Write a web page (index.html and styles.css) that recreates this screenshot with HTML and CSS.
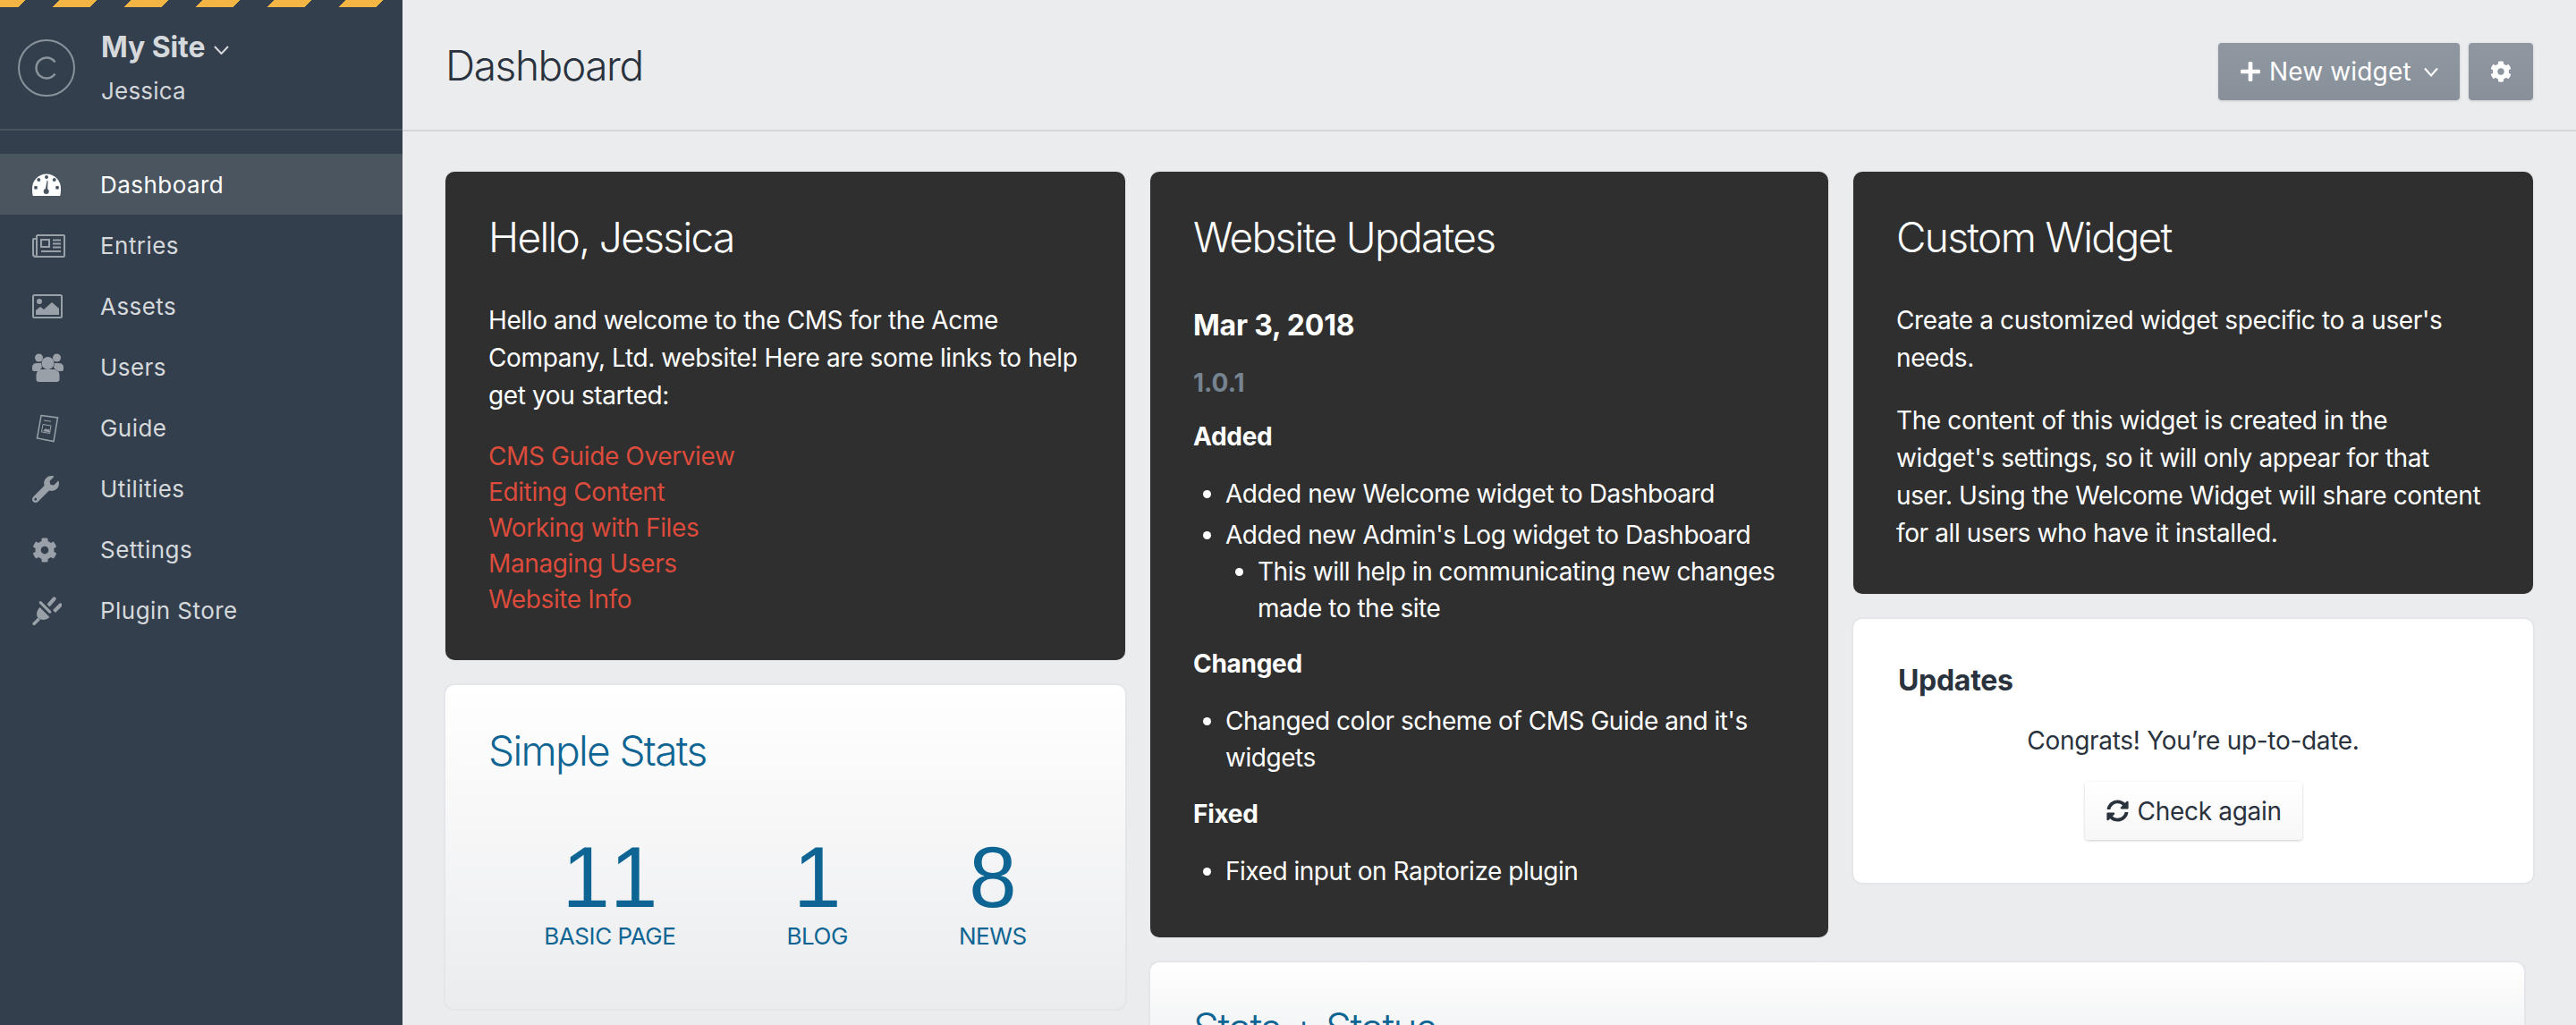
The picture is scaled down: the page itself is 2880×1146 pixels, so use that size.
FILE: index.html
```html
<!DOCTYPE html>
<html lang="en">
<head>
<meta charset="utf-8">
<title>Dashboard</title>
<link rel="stylesheet" href="styles.css">
</head>
<body>
<svg class="defs" width="0" height="0">
  <symbol id="cog" viewBox="0 0 512 512"><path d="M487.4 315.7l-42.6-24.6c4.3-23.2 4.3-47 0-70.2l42.6-24.6c4.9-2.8 7.1-8.6 5.5-14-11.1-35.6-30-67.8-54.7-94.6-3.8-4.1-10-5.1-14.8-2.3L380.8 110c-17.9-15.4-38.5-27.3-60.8-35.1V25.8c0-5.6-3.9-10.5-9.4-11.7-36.7-8.2-74.3-7.8-109.2 0-5.5 1.2-9.4 6.1-9.4 11.7V75c-22.2 7.9-42.8 19.8-60.8 35.1L88.7 85.5c-4.9-2.8-11-1.9-14.8 2.3-24.7 26.7-43.6 58.9-54.7 94.6-1.7 5.4.6 11.2 5.5 14L67.3 221c-4.3 23.2-4.3 47 0 70.2l-42.6 24.6c-4.9 2.8-7.1 8.6-5.5 14 11.1 35.6 30 67.8 54.7 94.6 3.8 4.1 10 5.1 14.8 2.3l42.6-24.6c17.9 15.4 38.5 27.3 60.8 35.1v49.2c0 5.6 3.9 10.5 9.4 11.7 36.7 8.2 74.3 7.8 109.2 0 5.5-1.2 9.4-6.1 9.4-11.7v-49.2c22.2-7.9 42.8-19.8 60.8-35.1l42.6 24.6c4.9 2.8 11 1.9 14.8-2.3 24.7-26.7 43.6-58.9 54.7-94.6 1.5-5.5-.7-11.3-5.6-14.1zM256 336c-44.1 0-80-35.9-80-80s35.9-80 80-80 80 35.9 80 80-35.9 80-80 80z"/></symbol>
</svg>
<div class="app">
  <aside class="sidebar">
    <div class="stripes"></div>
    <div class="site">
      <div class="logo">
        <svg width="28" height="28" viewBox="0 0 28 28"><path class="logo-c" d="M23.500 7.500A11.500 11.500 0 1 0 23.500 20.500"/></svg>
      </div>
      <div class="site-text">
        <div class="site-name">My Site
          <svg class="chev-site" width="17" height="10" viewBox="0 0 17 10"><path d="M1 1l7.500 8L16 1"/></svg>
        </div>
        <div class="site-user">Jessica</div>
      </div>
    </div>
    <nav class="nav">
      <a class="nav-item active">
        <span class="nav-icon">
          <svg width="32" height="25" viewBox="0 0 32 25"><path class="gauge" d="M.8 25C.3 23 0 21 0 17A16 16.500 0 0 1 32 17C32 21 31.700 23 31.200 25Z"/><g class="gauge-dots"><circle cx="4" cy="15.700" r="2"/><circle cx="7.300" cy="7" r="2"/><circle cx="16" cy="4" r="2"/><circle cx="24.700" cy="7" r="2"/><circle cx="28" cy="15.700" r="2"/><circle cx="15.700" cy="20" r="3"/><path d="M14.500 19l2-11h1l-.500 12z"/></g></svg>
        </span>
        <span>Dashboard</span>
      </a>
      <a class="nav-item">
        <span class="nav-icon">
          <svg width="37" height="26" viewBox="0 0 37 26"><g class="line-icon"><path d="M5 1h30a1 1 0 0 1 1 1v22a1 1 0 0 1-1 1H4a3 3 0 0 1-3-3V6a1 1 0 0 1 1-1h3"/><path d="M5 1v21a3 3 0 0 1-1.500 3"/><rect x="10" y="6" width="9" height="8"/><path d="M23 6.500h9M23 10.500h9M23 14.500h9M10 19h22"/></g></svg>
        </span>
        <span>Entries</span>
      </a>
      <a class="nav-item">
        <span class="nav-icon">
          <svg width="34" height="27" viewBox="0 0 34 27"><rect class="line-icon" x="1" y="1" width="32" height="25" rx="1.500"/><circle class="fill-icon" cx="8" cy="8" r="3"/><path class="fill-icon" d="M4 23v-5l5-4 4 3 9-8 8 7v7z"/></svg>
        </span>
        <span>Assets</span>
      </a>
      <a class="nav-item">
        <span class="nav-icon">
          <svg width="35" height="32" viewBox="0 0 35 32"><g class="fill-icon"><circle cx="7.500" cy="5" r="4.500"/><circle cx="27.500" cy="5" r="4.500"/><circle cx="17.500" cy="11" r="7"/><path d="M0 15a5 5 0 0 1 5-4h5l1 5-4 4-5 0a2 2 0 0 1-2-2zM35 15a5 5 0 0 0-5-4h-5l-1 5 4 4 5 0a2 2 0 0 0 2-2zM4.500 24a6 6 0 0 1 6-6h14a6 6 0 0 1 6 6v5a3 3 0 0 1-3 3h-20a3 3 0 0 1-3-3z"/></g></svg>
        </span>
        <span>Users</span>
      </a>
      <a class="nav-item">
        <span class="nav-icon">
          <svg class="guide" width="26" height="32" viewBox="0 0 26 32"><path class="line-thin" d="M6 1.500L24.500 4 20 30.500 1.500 27z"/><path class="line-hair" d="M9 7l8 1.200M8 11.500l9 1.500-1.500 8.500-9-1.500z"/><path class="fill-icon" d="M8 19l3-3 2 1.500 2-1 .500 4z"/></svg>
        </span>
        <span>Guide</span>
      </a>
      <a class="nav-item">
        <span class="nav-icon">
          <svg width="30" height="30" viewBox="0 0 512 512"><path class="fill-icon" d="M507.730 109.100c-2.240-9.030-13.540-12.090-20.120-5.510l-74.360 74.360-67.880-11.310-11.310-67.880 74.360-74.360c6.620-6.620 3.430-17.900-5.660-20.160-47.380-11.740-99.550.910-136.580 37.930-39.640 39.640-50.550 97.100-34.050 147.200L18.740 402.760c-24.990 24.990-24.990 65.510 0 90.500 24.990 24.990 65.510 24.990 90.500 0l213.210-213.210c50.120 16.710 107.470 5.680 147.370-34.220 37.070-37.070 49.700-89.320 37.910-136.730zM64 472c-13.250 0-24-10.750-24-24 0-13.260 10.750-24 24-24s24 10.740 24 24c0 13.250-10.750 24-24 24z"/></svg>
        </span>
        <span>Utilities</span>
      </a>
      <a class="nav-item">
        <span class="nav-icon">
          <svg class="fill-icon" width="28" height="28"><use href="#cog"/></svg>
        </span>
        <span>Settings</span>
      </a>
      <a class="nav-item">
        <span class="nav-icon">
          <svg width="33" height="33" viewBox="0 0 33 33"><g class="fill-icon"><path d="M.500 30.500L6.500 24.500 9 27 3 33H1.500a1 1 0 0 1-1-1z"/><path d="M8.500 13l11 11c-4 3.500-9 3.800-12.500 1C4 22.500 4.600 17 8.500 13z"/><rect x="5.500" y="11.300" width="18" height="3.200" rx="1.600" transform="rotate(45 14.500 12.900)" class="plug-bar"/><path d="M16.500 9.500l6.500-7.500a2 2 0 0 1 3 3l-6.500 7.500zM23 16l7-7a2 2 0 0 1 3 3l-7 7z"/></g></svg>
        </span>
        <span>Plugin Store</span>
      </a>
    </nav>
  </aside>
  <main class="main">
    <header class="topbar">
      <h1 class="page-title">Dashboard</h1>
      <div class="actions">
        <button class="btn btn-new">
          <svg class="white" width="22" height="22" viewBox="0 0 448 448"><path d="M416 176H272V32c0-17.670-14.330-32-32-32h-32c-17.670 0-32 14.330-32 32v144H32c-17.670 0-32 14.330-32 32v32c0 17.670 14.330 32 32 32h144v144c0 17.670 14.330 32 32 32h32c17.670 0 32-14.330 32-32V272h144c17.670 0 32-14.330 32-32v-32c0-17.670-14.330-32-32-32z"/></svg>
          <span class="btn-label">New widget</span>
          <svg class="chev-btn" width="16" height="11" viewBox="0 0 16 11"><path d="M1 1.500l7 8 7-8"/></svg>
        </button>
        <button class="btn btn-gear">
          <svg class="white" width="24" height="24"><use href="#cog"/></svg>
        </button>
      </div>
    </header>
    <div class="board">
      <div class="col-left">
        <section class="card dark">
          <h2 class="card-title">Hello, Jessica</h2>
          <p class="para">Hello and welcome to the CMS for the Acme Company, Ltd. website! Here are some links to help get you started:</p>
          <ul class="links">
            <li><a>CMS Guide Overview</a></li>
            <li><a>Editing Content</a></li>
            <li><a>Working with Files</a></li>
            <li><a>Managing Users</a></li>
            <li><a>Website Info</a></li>
          </ul>
        </section>
        <section class="card stats">
          <h2 class="card-title blue">Simple Stats</h2>
          <div class="stat-row">
            <div class="stat"><div class="stat-num">11</div><div class="stat-label">BASIC PAGE</div></div>
            <div class="stat"><div class="stat-num">1</div><div class="stat-label">BLOG</div></div>
            <div class="stat"><div class="stat-num">8</div><div class="stat-label">NEWS</div></div>
          </div>
        </section>
      </div>
      <div class="col-right">
        <div class="right-top">
          <section class="card dark updates-log">
            <h2 class="card-title">Website Updates</h2>
            <h3 class="log-date">Mar 3, 2018</h3>
            <h4 class="log-version">1.0.1</h4>
            <h5 class="log-head log-first">Added</h5>
            <ul class="log-list">
              <li>Added new Welcome widget to Dashboard</li>
              <li>Added new Admin's Log widget to Dashboard
                <ul class="log-sub"><li>This will help in communicating new changes made to the site</li></ul>
              </li>
            </ul>
            <h5 class="log-head">Changed</h5>
            <ul class="log-list"><li>Changed color scheme of CMS Guide and it's widgets</li></ul>
            <h5 class="log-head log-last">Fixed</h5>
            <ul class="log-list"><li>Fixed input on Raptorize plugin</li></ul>
          </section>
          <div class="col-third">
            <section class="card dark custom">
              <h2 class="card-title">Custom Widget</h2>
              <p class="para">Create a customized widget specific to a user's needs.</p>
              <p class="para para-next">The content of this widget is created in the widget's settings, so it will only appear for that user. Using the Welcome Widget will share content for all users who have it installed.</p>
            </section>
            <section class="card white-card updates">
              <h3 class="updates-title">Updates</h3>
              <p class="updates-msg">Congrats! You’re up-to-date.</p>
              <div class="updates-action">
                <button class="btn-check">
                  <svg width="25" height="25" viewBox="0 0 512 512"><path d="M370.720 133.280C339.458 104.008 298.888 87.962 255.848 88c-77.458.068-144.328 53.178-162.791 126.850-1.344 5.363-6.122 9.150-11.651 9.150H24.103c-7.498 0-13.194-6.807-11.807-14.176C33.933 94.924 134.813 8 256 8c66.448 0 126.791 26.136 171.315 68.685L463.030 40.970C478.149 25.851 504 36.559 504 57.941V192c0 13.255-10.745 24-24 24H345.941c-21.382 0-32.090-25.851-16.971-40.971l41.750-41.749zM32 296h134.059c21.382 0 32.090 25.851 16.971 40.971l-41.750 41.750c31.262 29.273 71.835 45.319 114.876 45.280 77.418-.070 144.315-53.144 162.787-126.849 1.344-5.363 6.122-9.150 11.651-9.150h57.304c7.498 0 13.194 6.807 11.807 14.176C478.067 417.076 377.187 504 256 504c-66.448 0-126.791-26.136-171.315-68.685L48.970 471.030C33.851 486.149 8 475.441 8 454.059V320c0-13.255 10.745-24 24-24z"/></svg>
                  <span>Check again</span>
                </button>
              </div>
            </section>
          </div>
        </div>
        <section class="card stats wide">
          <h2 class="card-title blue">Stats + Status</h2>
        </section>
      </div>
    </div>
  </main>
</div>
</body>
</html>
```
FILE: styles.css
```css
* { box-sizing: border-box; }
html, body { margin: 0; padding: 0; height: 100%; overflow: hidden; }
body { font-family: Inter, "Liberation Sans", sans-serif; font-size: 28px; line-height: 42px; color: #29323d; background: #ebecee; }
.defs { position: absolute; }
h1, h2, h3, h4, h5, p, ul { margin: 0; padding: 0; }
.app { display: flex; height: 1146px; overflow: hidden; }

/* sidebar */
.sidebar { width: 450px; flex: none; background: #333f4d; }
.stripes { height: 8px; background: repeating-linear-gradient(135deg, #f5b544 0, #f5b544 19.8px, transparent 19.8px, transparent 46.67px, #f5b544 46.67px, #f5b544 56.57px); }
.site { height: 138px; display: flex; padding: 36px 0 0 20px; border-bottom: 2px solid #49545f; }
.logo { width: 64px; height: 64px; border: 2px solid #8a929c; border-radius: 50%; display: flex; align-items: center; justify-content: center; flex: none; }
.logo-c { fill: none; stroke: #8a929c; stroke-width: 2.500; }
.site-text { margin-left: 29px; margin-top: -11px; }
.site-name { font-size: 32px; font-weight: 700; line-height: 40px; color: #d6d9dc; display: flex; align-items: center; gap: 10px; letter-spacing: -.1px; }
.chev-site { margin-top: 6px; }
.chev-site path, .chev-btn path { fill: none; stroke-width: 2; }
.chev-site path { stroke: #d6d9dc; }
.site-user { font-size: 26px; line-height: 40px; margin-top: 9px; color: #d3d6da; letter-spacing: .2px; }
.nav { padding-top: 26px; }
.nav-item { display: flex; align-items: center; height: 68px; padding-top: 1px; font-size: 26px; color: #d6d9dc; letter-spacing: .45px; }
.nav-item.active { background: #4a5560; color: #fff; }
.nav-icon { width: 112px; padding-left: 36px; flex: none; display: flex; align-items: center; }
.nav-icon svg { display: block; }
.gauge { fill: #fff; }
.gauge-dots { fill: #4a5560; }
.line-icon { fill: none; stroke: #99a0a8; stroke-width: 2; }
.fill-icon { fill: #99a0a8; }
.line-thin { fill: none; stroke: #99a0a8; stroke-width: 1.500; }
.line-hair { fill: none; stroke: #99a0a8; stroke-width: 1; }
.guide { margin-left: 4px; }

/* top */
.main { flex: 1; min-width: 0; }
.topbar { height: 147px; border-bottom: 2px solid #d4d6d9; padding: 0 48px; display: flex; align-items: flex-start; justify-content: space-between; }
.page-title { font-size: 46px; font-weight: 300; line-height: 56px; margin-top: 45px; letter-spacing: -1.4px; color: #29323d; }
.actions { display: flex; gap: 10px; margin-top: 48px; }
.btn { height: 64px; border: 0; border-radius: 4px; background: linear-gradient(#8f97a1, #88909a); box-shadow: 0 1px 3px rgba(0,0,0,.15); color: #fff; font: inherit; display: flex; align-items: center; padding: 0; }
.btn-new { width: 270px; padding-left: 25px; }
.btn-label { margin-left: 10px; letter-spacing: .15px; }
.chev-btn { margin-left: 14px; }
.chev-btn path { stroke: #fff; }
.btn-gear { width: 72px; justify-content: center; }
.white { fill: #fff; display: block; }

/* board */
.board { display: flex; gap: 28px; padding: 45px 48px 0; align-items: flex-start; }
.col-left { width: 760px; flex: none; display: flex; flex-direction: column; gap: 28px; }
.col-right { flex: 1; min-width: 0; }
.right-top { display: flex; gap: 28px; align-items: flex-start; }
.updates-log { width: 758px; flex: none; height: 856px; }
.col-third { flex: 1; min-width: 0; display: flex; flex-direction: column; gap: 28px; }
.card { border-radius: 10px; padding: 46px 48px 0; }
.dark { background: #2f2f2f; color: #fff; box-shadow: 0 0 0 1px rgba(0,0,0,.03); }
.card-title { font-size: 46px; font-weight: 300; line-height: 54px; letter-spacing: -1.65px; margin-bottom: 45px; }
.blue { color: #0e6593; }
.para { letter-spacing: -.38px; }
.para-next { margin-top: 28px; }
.links { list-style: none; margin-top: 27px; padding-bottom: 48px; line-height: 40px; letter-spacing: -.38px; }
.links a { color: #dc4b3b; }

/* stats */
.stats { background: linear-gradient(#fff, #ebecee); box-shadow: 0 0 0 2px #e4e6e9; }
.stat-row { display: flex; justify-content: center; gap: 124px; margin-top: 65px; padding-bottom: 61px; color: #0e6593; }
.stat { text-align: center; }
.stat-num { font-family: "Liberation Sans", Inter, sans-serif; font-size: 96px; line-height: 92px; padding-top: 4px; font-kerning: none; }
.stat-label { font-size: 26px; line-height: 40px; letter-spacing: -.45px; }
.wide { width: 1536px; margin-top: 28px; height: 300px; background: linear-gradient(#fff, #f4f5f6 70px); }

/* log */
.updates-log .card-title { margin-bottom: 50px; }
.log-date { font-size: 32px; font-weight: 700; line-height: 44px; letter-spacing: -.2px; }
.log-version { font-size: 28px; font-weight: 700; line-height: 40px; margin-top: 22px; color: #768391; letter-spacing: 0; }
.log-head { font-size: 28px; font-weight: 700; line-height: 40px; margin-top: 21px; letter-spacing: -.3px; }
.log-first { margin-top: 20px; }
.log-last { margin-top: 22px; }
.log-list { padding-left: 36px; margin-top: 24px; line-height: 41px; letter-spacing: -.47px; }
.log-list > li + li { margin-top: 5px; }
.log-sub { padding-left: 36px; list-style: disc; }
.custom { padding-bottom: 47px; }

/* updates */
.white-card { background: #fff; box-shadow: 0 0 0 2px #e4e6e9; padding: 48px 50px 48px; }
.updates-title { font-size: 32px; font-weight: 700; line-height: 42px; letter-spacing: -.3px; }
.updates-msg { text-align: center; margin-top: 25px; letter-spacing: -.3px; }
.updates-action { display: flex; justify-content: center; margin-top: 25px; }
.btn-check { width: 243px; height: 65px; border: 0; border-radius: 4px; background: linear-gradient(#fff, #f7f7f7); box-shadow: 0 1px 3px rgba(0,0,0,.2); font: inherit; color: #29323d; display: flex; align-items: center; gap: 10px; padding: 0 0 0 24px; letter-spacing: -.3px; }
.btn-check svg { fill: #29323d; flex: none; }
```
